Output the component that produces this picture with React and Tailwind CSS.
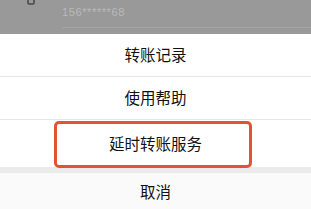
import React from 'react';

const font = { fontFamily: '"Noto Sans CJK SC", "Noto Sans", sans-serif' };

const Row = ({ label, children, className = '' }) => (
  <div className={`relative flex items-center justify-center text-[15.5px] text-[#111111] ${className}`}>
    {label}
    {children}
  </div>
);

export default function App() {
  return (
    <div className="w-[311px] h-[209px] overflow-hidden bg-white" style={font}>
      {/* 背景のページ（グレーのオーバーレイ） */}
      <div className="h-[34px] bg-[#999999] flex">
        <div className="w-[62px] flex justify-end pr-[27px]">
          <svg width="8" height="6" viewBox="0 0 8 6" className="-mt-[1px]">
            <path d="M1 0 L1 4 Q1 5 2 5 L6 5 Q7 5 7 4 L7 0" fill="none" stroke="#4a4a4a" strokeWidth="1.6" />
          </svg>
        </div>
        <div className="flex-1 flex flex-col">
          <div className="pt-[6px] text-[11px] leading-[12px] text-[#bababa] tracking-[0.6px]" style={{ fontFamily: '"Liberation Sans", Arial, sans-serif' }}>
            156******68
          </div>
          <div className="mt-[9px] h-px bg-[#a4a4a4]" />
        </div>
      </div>

      {/* アクションシート */}
      <div className="flex flex-col">
        <Row label="转账记录" className="h-[43px] border-b border-[#e6e6e6]" />
        <Row label="使用帮助" className="h-[43px] border-b border-[#e6e6e6]" />
        <Row label="延时转账服务" className="h-[47px]">
          <div className="absolute left-[54px] w-[198px] top-[1px] -bottom-[1px] border-[3px] border-[#df5530] rounded-[5px]" />
        </Row>
        <div className="h-[6px] bg-[#ebebeb]" />
        <Row label="取消" className="h-[38px] bg-[#fafafa]" />
      </div>
    </div>
  );
}
